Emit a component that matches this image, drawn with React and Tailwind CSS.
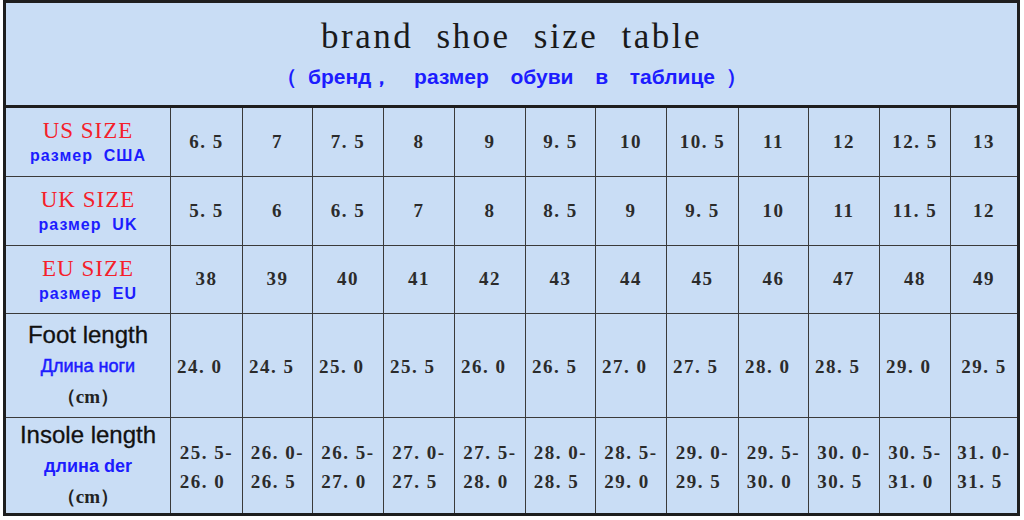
import React from "react";

const rows = [
  {
    label: "US SIZE",
    sub: "размер  США",
    vals: ["6. 5", "7", "7. 5", "8", "9", "9. 5", "10", "10. 5", "11", "12", "12. 5", "13"],
  },
  {
    label: "UK SIZE",
    sub: "размер  UK",
    vals: ["5. 5", "6", "6. 5", "7", "8", "8. 5", "9", "9. 5", "10", "11", "11. 5", "12"],
  },
  {
    label: "EU SIZE",
    sub: "размер  EU",
    vals: ["38", "39", "40", "41", "42", "43", "44", "45", "46", "47", "48", "49"],
  },
];
const foot = ["24. 0", "24. 5", "25. 0", "25. 5", "26. 0", "26. 5", "27. 0", "27. 5", "28. 0", "28. 5", "29. 0", "29. 5"];
const insole = [
  ["25. 5-", "26. 0"],
  ["26. 0-", "26. 5"],
  ["26. 5-", "27. 0"],
  ["27. 0-", "27. 5"],
  ["27. 5-", "28. 0"],
  ["28. 0-", "28. 5"],
  ["28. 5-", "29. 0"],
  ["29. 0-", "29. 5"],
  ["29. 5-", "30. 0"],
  ["30. 0-", "30. 5"],
  ["30. 5-", "31. 0"],
  ["31. 0-", "31. 5"],
];

const SERIF = "font-['Liberation_Serif','DejaVu_Serif',serif]";
const SANS = "font-['Liberation_Sans',Arial,sans-serif]";
const NUM = `${SERIF} bg-[#c9ddf5] flex items-center text-[19px] font-bold text-[#2b2b2b] tracking-[1.5px] whitespace-pre`;

function Label({ title, sub, subBold }) {
  return (
    <div className="bg-[#c9ddf5] flex flex-col items-center justify-center">
      <div className={`${SANS} text-[24px] leading-[30px] text-[#111] [-webkit-text-stroke:0.3px_#111]`}>{title}</div>
      <div
        className={`${SANS} text-[18px] leading-[32px] text-[#1c1cff] ${subBold ? "font-bold" : "[-webkit-text-stroke:0.5px_#1c1cff]"}`}
      >
        {sub}
      </div>
      <div className={`${SERIF} text-[19px] leading-[30px] font-bold text-[#222] whitespace-pre`}>（cm）</div>
    </div>
  );
}

export default function App() {
  return (
    <div className="w-[1024px] h-[520px] bg-white overflow-hidden">
      <div className="ml-[3px] w-[1017px] h-[516px] border-[3px] border-[#1e1e1e] bg-[#c9ddf5] flex flex-col">
        <div className="h-[105px] border-b-[3px] border-[#1e1e1e] flex flex-col items-center">
          <div className={`${SERIF} mt-[13px] text-[35px] leading-[42px] text-[#1a1a1a] tracking-[2.5px] [word-spacing:12px]`}>
            brand shoe size table
          </div>
          <div className={`${SANS} mt-[6px] text-[21px] leading-[26px] font-bold text-[#1c1cff] whitespace-pre [word-spacing:5px]`}>
            （ бренд，  размер  обуви  в  таблице ）
          </div>
        </div>
        <div className="grid flex-1 gap-px bg-[#3a3a3a] grid-cols-[164px_71px_69px_70px_70px_70px_69px_70px_71px_69px_70px_70px_66px] grid-rows-[68px_68px_67px_103px_95px]">
          {rows.map((r) => (
            <React.Fragment key={r.label}>
              <div className="bg-[#c9ddf5] flex flex-col items-center justify-center">
                <div className={`${SERIF} text-[23px] leading-[26px] text-[#f5202a] tracking-[1px]`}>{r.label}</div>
                <div className={`${SANS} mt-[2px] text-[16px] leading-[20px] font-bold text-[#1c1cff] whitespace-pre tracking-[1px]`}>
                  {r.sub}
                </div>
              </div>
              {r.vals.map((v, i) => (
                <div key={i} className={`${NUM} justify-center`}>
                  {v}
                </div>
              ))}
            </React.Fragment>
          ))}
          <Label title="Foot length" sub="Длина ноги" />
          {foot.map((v, i) => (
            <div key={i} className={`${NUM} pt-[4px] ${i === 11 ? "justify-center" : "pl-[6px]"}`}>
              {v}
            </div>
          ))}
          <Label title="Insole length" sub="длина der" subBold />
          {insole.map((v, i) => (
            <div
              key={i}
              className={`${SERIF} bg-[#c9ddf5] flex flex-col items-center justify-center pt-[2px] text-[19px] leading-[29px] font-bold text-[#2b2b2b] tracking-[1.5px] whitespace-pre`}
            >
              <div>{v[0]}</div>
              <div className="pr-[8px]">{v[1]}</div>
            </div>
          ))}
        </div>
      </div>
    </div>
  );
}
